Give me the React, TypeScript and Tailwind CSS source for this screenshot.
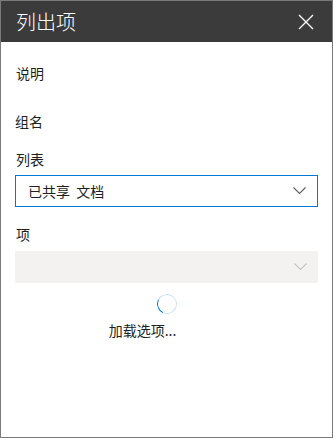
import React from "react";

const font = { fontFamily: '"Noto Sans CJK SC", "Noto Sans", sans-serif' };

function Chevron({ color }: { color: string }) {
  return (
    <svg width="13" height="8" viewBox="0 0 13 8" fill="none">
      <path d="M0.5 0.5 L6.5 6.5 L12.5 0.5" stroke={color} strokeWidth="1.1" />
    </svg>
  );
}

export default function App() {
  return (
    <div
      className="flex h-[438px] w-[333px] flex-col border border-[#7a7a7a] bg-white text-[14px] text-[#201f1e]"
      style={font}
    >
      {/* header */}
      <div className="flex h-[41px] shrink-0 items-center justify-between bg-[#3b3b3b] pl-[15px] pr-[18px]">
        <span className="text-[20px] font-light leading-none text-white">列出项</span>
        <svg width="16" height="16" viewBox="0 0 16 16" fill="none">
          <path d="M1 1 L15 15 M15 1 L1 15" stroke="#ffffff" strokeWidth="1.4" />
        </svg>
      </div>

      <div className="flex flex-col px-[14px]">
        <div className="mt-[21px] pl-[1px] leading-[20px]">说明</div>
        <div className="mt-[28px] leading-[20px]">组名</div>
        <div className="mt-[18px] pl-[1px] leading-[20px]">列表</div>
        <div className="mt-[6px] flex h-[32px] items-center justify-between border border-[#0078d4] pl-[12px] pr-[11px]">
          <span className="leading-none">已共享&nbsp;&nbsp;文档</span>
          <Chevron color="#605e5c" />
        </div>

        <div className="mt-[17px] pl-[1px] leading-[20px]">项</div>
        <div className="mt-[7px] flex h-[32px] items-center justify-end bg-[#f3f2f1] pr-[11px]">
          <Chevron color="#c8c6c4" />
        </div>

        <div className="mt-[11px] flex flex-col items-center">
          <div className="h-[20px] w-[20px] rounded-full border-[1.5px] border-[#c7e0f4] border-l-[#0078d4]" style={{ transform: "rotate(-20deg)" }} />
          <div className="mr-[48px] mt-[6px] leading-[20px]">加载选项...</div>
        </div>
      </div>
    </div>
  );
}
